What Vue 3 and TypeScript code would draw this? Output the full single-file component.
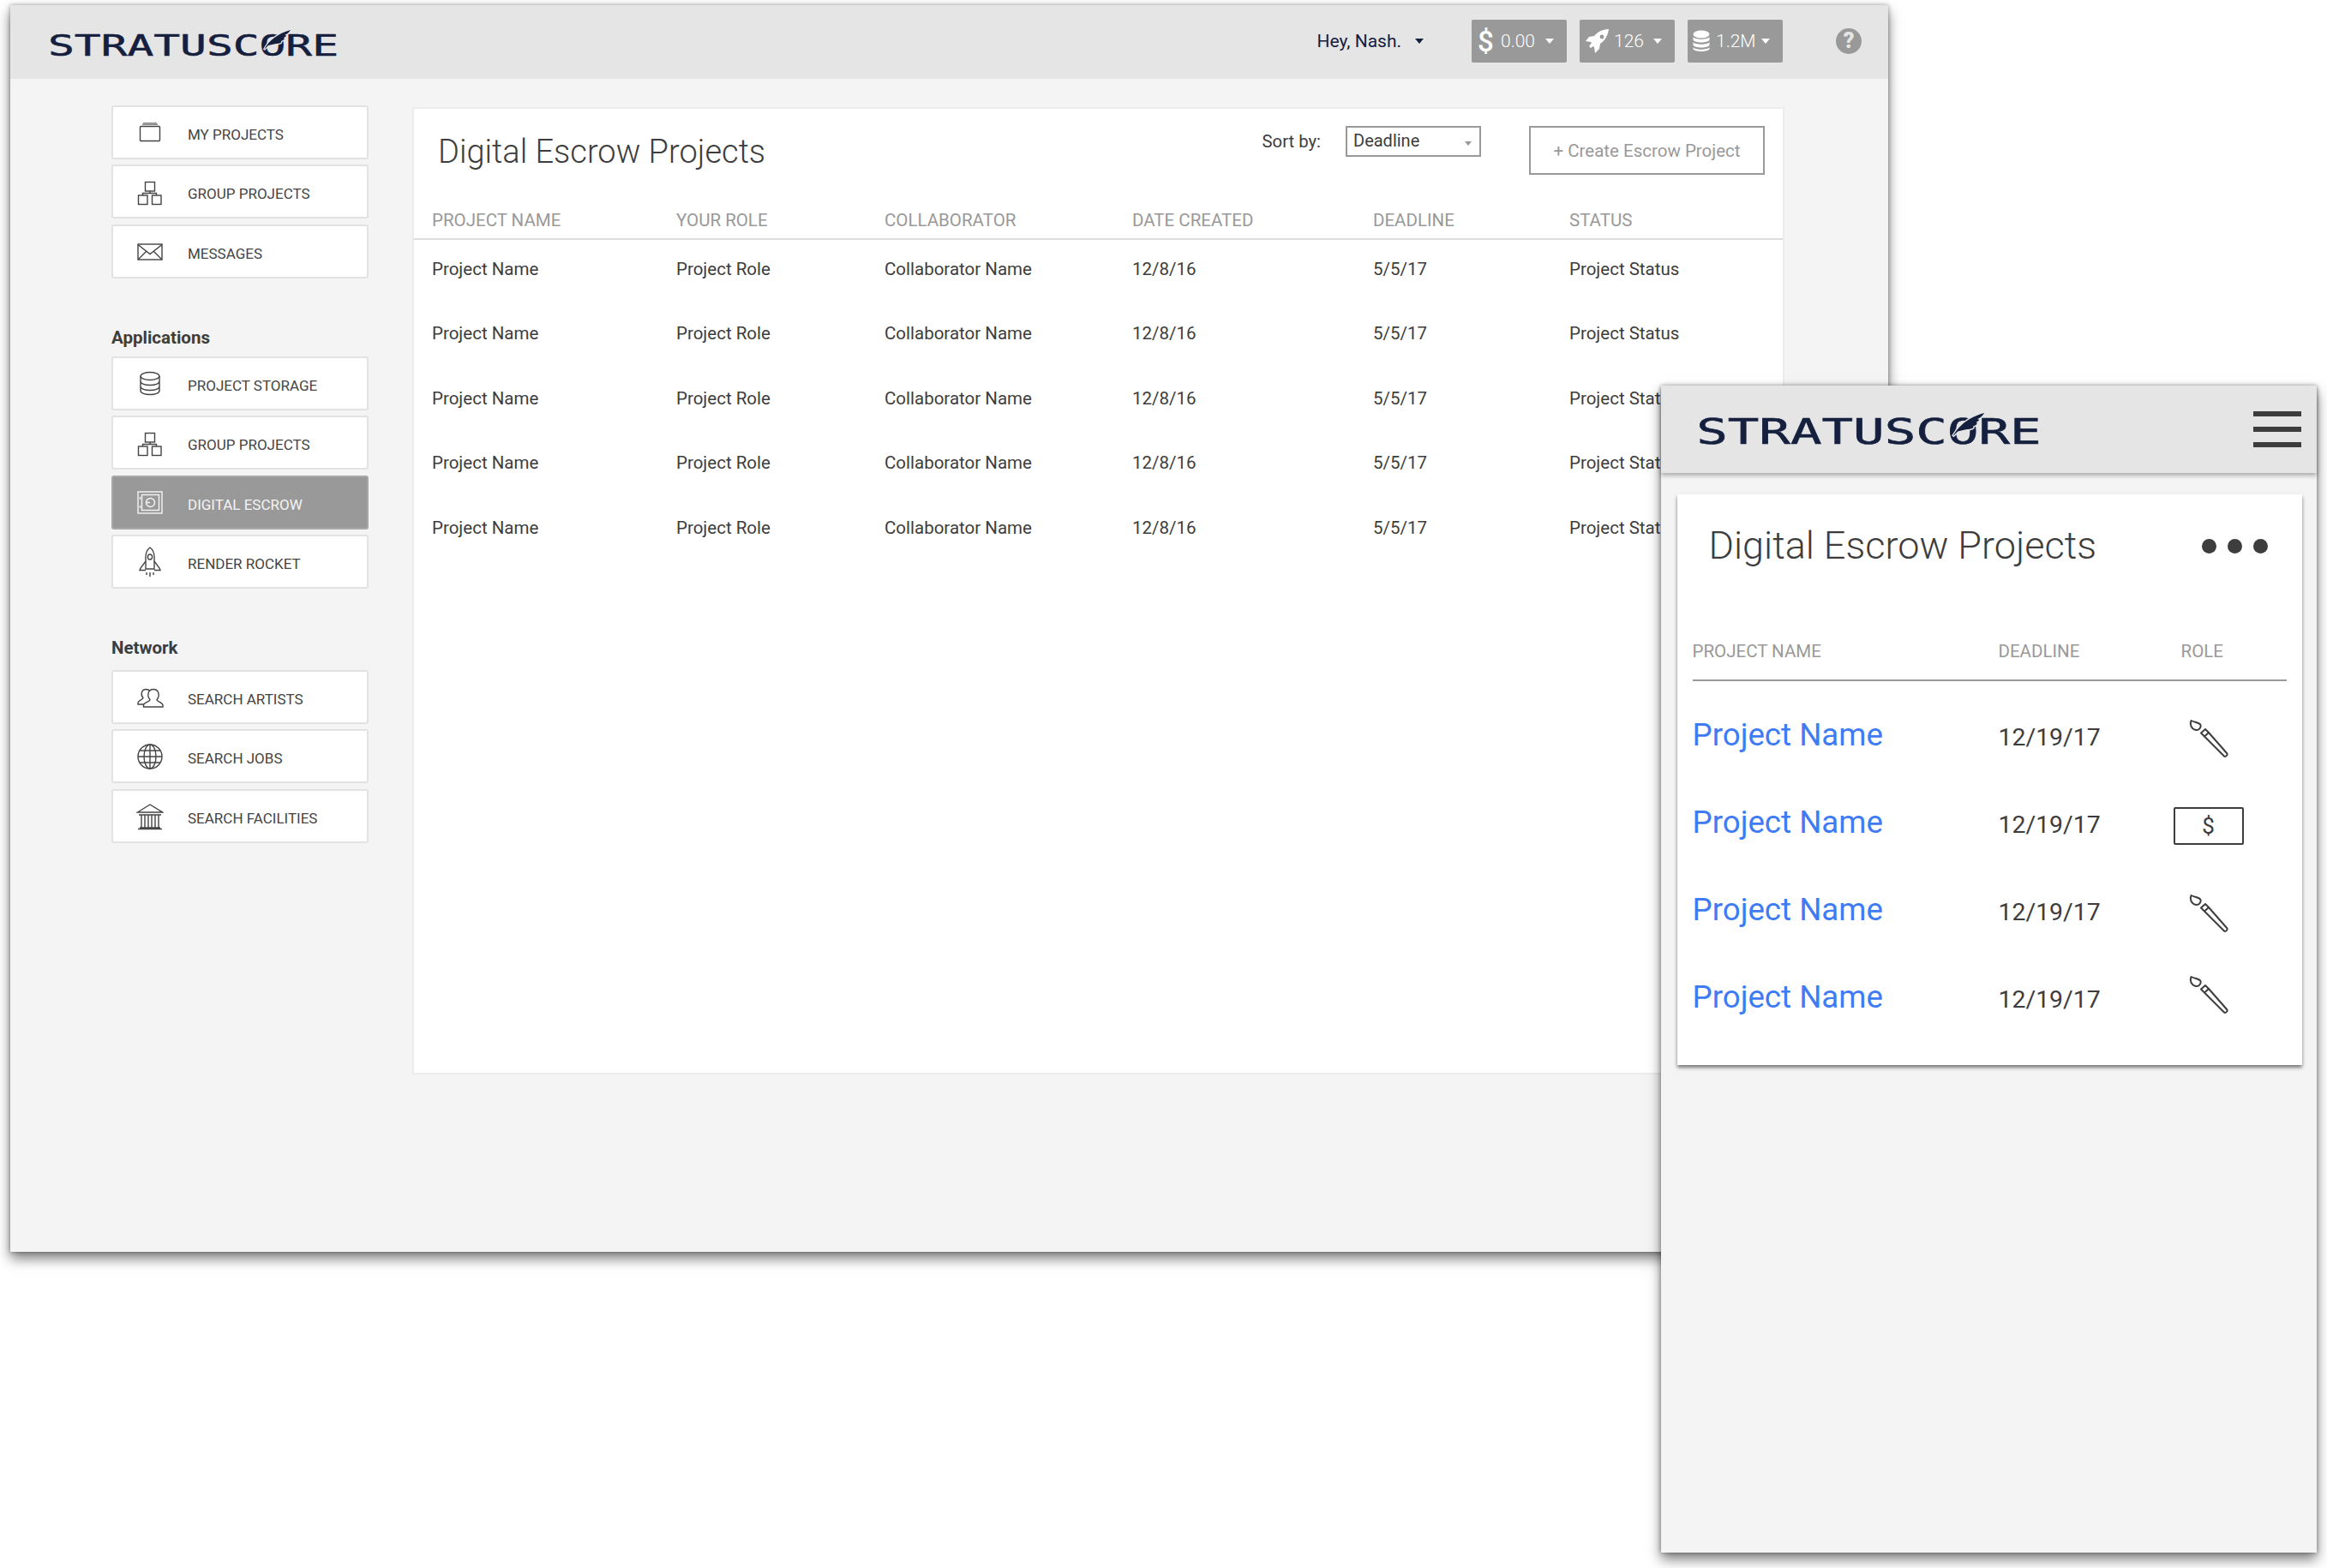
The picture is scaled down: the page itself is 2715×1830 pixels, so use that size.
<template>
  <div class="canvas">
    <section class="window desktop">
      <header class="topbar">
        <svg class="logo" viewBox="0 0 340 32" aria-label="Stratuscore">
          <text class="logo-text" x="0" y="30" textLength="339" lengthAdjust="spacingAndGlyphs">STRATUSCORE</text>
          <path class="quill" d="M252 23C258 12 268 4 283 0C281 3 279 5 276 6C279 6 278 8 275 9C277 10 275 12 272 13C273 15 270 16 266 16C263 17 260 17 257 18Z" />
        </svg>
        <div class="greeting">Hey, Nash. <i class="caret navy"></i></div>
        <div class="stat">
          <span class="stat-dollar">$</span>
          <span class="stat-value">0.00</span>
          <i class="caret"></i>
        </div>
        <div class="stat">
          <svg class="stat-rocket" viewBox="0 0 28 28">
            <path d="M28 0c-7 0-13 2-18 8l-6 1-4 5 6 1 1 1-3 4 2 2 3-2 1 1 1 7 5-5 1-6c6-4 9-10 10-17z" />
            <circle cx="19" cy="9" r="2.4" fill="#999" />
          </svg>
          <span class="stat-value">126</span>
          <i class="caret"></i>
        </div>
        <div class="stat">
          <svg class="stat-coins" viewBox="0 0 20 26">
            <ellipse cx="10" cy="5" rx="9.5" ry="4.5" />
            <path d="M.5 8c2 3.6 17 3.6 19 0v3.4c-1 4-18 4-19 0z" />
            <path d="M.5 14c2 3.6 17 3.6 19 0v3.4c-1 4-18 4-19 0z" />
            <path d="M.5 20c2 3.6 17 3.6 19 0v2c-1 4-18 4-19 0z" />
          </svg>
          <span class="stat-value">1.2M</span>
          <i class="caret"></i>
        </div>
        <div class="help">?</div>
      </header>

      <div class="desktop-body">
        <nav class="sidebar">
          <div v-for="section in navSections" :key="section.title" class="nav-section">
            <h3 v-if="section.title !== 'main'" class="nav-heading">{{ section.title }}</h3>
            <div class="nav-list">
              <a
                v-for="item in section.items"
                :key="item.label"
                class="nav-item"
                :class="{ active: item.active }"
              >
                <span class="nav-icon">
                  <svg viewBox="0 0 32 36" width="32" height="36">
                    <g v-if="item.icon === 'folder'">
                      <rect x="4.5" y="10.5" width="23" height="17" rx="1" />
                      <path d="M7 8.2h18M8 6.6h16" stroke="#888" />
                    </g>
                    <g v-else-if="item.icon === 'group'">
                      <rect x="10.5" y="6.5" width="11" height="10.5" />
                      <rect x="2.5" y="22" width="10.5" height="10.5" />
                      <rect x="18.5" y="22" width="10.5" height="10.5" />
                      <path d="M16 17v2.5M7.5 22v-2.5h16V22" />
                    </g>
                    <g v-else-if="item.icon === 'mail'">
                      <rect x="2" y="9" width="28" height="18" />
                      <path d="M2 9.5l14 11 14-11M2 27l10-10M30 27L20 17" />
                    </g>
                    <g v-else-if="item.icon === 'storage'">
                      <ellipse cx="16" cy="9" rx="11" ry="4.5" />
                      <path d="M5 9v17c0 6 22 6 22 0V9M5 15c0 6 22 6 22 0M5 21c0 6 22 6 22 0" />
                    </g>
                    <g v-else-if="item.icon === 'safe'">
                      <rect x="2" y="5" width="28" height="25" />
                      <rect x="6.5" y="8.5" width="20" height="18" />
                      <circle cx="16.5" cy="17.5" r="5" />
                      <path d="M11 17.5h5M4.5 11v3M4.5 21v3" />
                    </g>
                    <g v-else-if="item.icon === 'rocket'">
                      <path d="M16 1c-4 3-5 7-5 11v14h10V12c0-4-1-8-5-11z" />
                      <ellipse cx="16" cy="12" rx="2.6" ry="3" />
                      <path d="M11 17l-6 8-1 2.5h7M21 17l6 8 1 2.5h-7M12 30v3M16 30v5M20 30v3" />
                    </g>
                    <g v-else-if="item.icon === 'people'">
                      <path d="M9 26h-7v-2c0-2.5 6-3.5 6-5.5-3-3-2.5-10 3.5-10 2 0 3.5 1 4 2" />
                      <path d="M8.5 29v-2c0-3 7.500-4 7.500-6.500-3.500-3.500-3-12 4-12s7.500 8.500 4 12c0 2.500 7 3.500 7 6.500v2z" />
                    </g>
                    <g v-else-if="item.icon === 'globe'">
                      <circle cx="16" cy="18" r="14" />
                      <ellipse cx="16" cy="18" rx="7" ry="14" />
                      <path d="M16 4v28M2 18h28M4 11h24M4 25h24" />
                    </g>
                    <g v-else>
                      <path d="M1.500 13L16 4l14.500 9zM3 16h26M2 32.500h28M4 31h24" />
                      <path d="M6 16v15M10 16v15M14 16v15M18 16v15M22 16v15M26 16v15" />
                    </g>
                  </svg>
                </span>
                <span class="nav-label">{{ item.label }}</span>
              </a>
            </div>
          </div>
        </nav>

        <main class="card">
          <div class="card-head">
            <h1 class="card-title">Digital Escrow Projects</h1>
            <span class="sort-label">Sort by:</span>
            <div class="sort-select">Deadline <i class="select-arrow"></i></div>
            <button class="create-btn" type="button">+ Create Escrow Project</button>
          </div>
          <div class="table-row table-head">
            <span v-for="col in desktopColumns" :key="col">{{ col }}</span>
          </div>
          <div v-for="row in 5" :key="row" class="table-row table-body">
            <span>Project Name</span>
            <span>Project Role</span>
            <span>Collaborator Name</span>
            <span>12/8/16</span>
            <span>5/5/17</span>
            <span>Project Status</span>
          </div>
        </main>
      </div>
    </section>

    <section class="window phone">
      <header class="phone-bar">
        <svg class="phone-logo" viewBox="0 0 340 32" aria-label="Stratuscore">
          <text class="logo-text" x="0" y="30" textLength="339" lengthAdjust="spacingAndGlyphs">STRATUSCORE</text>
          <path class="quill" d="M252 23C258 12 268 4 283 0C281 3 279 5 276 6C279 6 278 8 275 9C277 10 275 12 272 13C273 15 270 16 266 16C263 17 260 17 257 18Z" />
        </svg>
        <div class="burger"><i></i><i></i><i></i></div>
      </header>

      <div class="phone-card">
        <div class="phone-head">
          <h1 class="phone-title">Digital Escrow Projects</h1>
          <div class="dots"><i></i><i></i><i></i></div>
        </div>
        <div class="phone-row phone-columns">
          <span>PROJECT NAME</span>
          <span>DEADLINE</span>
          <span>ROLE</span>
        </div>
        <div class="phone-rows">
          <div v-for="(row, index) in phoneRows" :key="index" class="phone-row phone-item">
            <a class="phone-name">Project Name</a>
            <span class="phone-date">12/19/17</span>
            <span class="phone-role">
              <span v-if="row === 'money'" class="money-box">$</span>
              <svg v-else class="brush" viewBox="0 0 80 60" width="80" height="60">
                <path d="M16.500 11C14.500 15 16.500 21 22 22C26 22.500 28.500 18.500 27.500 16C26 13 21 13.500 16.500 11Z" />
                <path d="M28 25.500L33 21L37 25L32 29.500ZM32 29.500L55 52.500C56.500 54 59.500 51 58.500 49.500L37 25" />
              </svg>
            </span>
          </div>
        </div>
      </div>
    </section>
  </div>
</template>

<script setup lang="ts">
type NavIcon = 'folder' | 'group' | 'mail' | 'storage' | 'safe' | 'rocket' | 'people' | 'globe' | 'bank'

interface NavItem {
  label: string
  icon: NavIcon
  active?: boolean
}

const navSections: { title: string; items: NavItem[] }[] = [
  {
    title: 'main',
    items: [
      { label: 'MY PROJECTS', icon: 'folder' },
      { label: 'GROUP PROJECTS', icon: 'group' },
      { label: 'MESSAGES', icon: 'mail' },
    ],
  },
  {
    title: 'Applications',
    items: [
      { label: 'PROJECT STORAGE', icon: 'storage' },
      { label: 'GROUP PROJECTS', icon: 'group' },
      { label: 'DIGITAL ESCROW', icon: 'safe', active: true },
      { label: 'RENDER ROCKET', icon: 'rocket' },
    ],
  },
  {
    title: 'Network',
    items: [
      { label: 'SEARCH ARTISTS', icon: 'people' },
      { label: 'SEARCH JOBS', icon: 'globe' },
      { label: 'SEARCH FACILITIES', icon: 'bank' },
    ],
  },
]

const desktopColumns = ['PROJECT NAME', 'YOUR ROLE', 'COLLABORATOR', 'DATE CREATED', 'DEADLINE', 'STATUS']

const phoneRows = ['brush', 'money', 'brush', 'brush']
</script>

<style>
html,
body {
  margin: 0;
  background: #fff;
}
</style>

<style scoped>
.canvas {
  position: relative;
  width: 2715px;
  height: 1830px;
  overflow: hidden;
  font-family: Roboto, "Liberation Sans", sans-serif;
  color: #3d3d3d;
}

.window {
  position: absolute;
  box-sizing: border-box;
  background: #f4f4f4;
  box-shadow: 0 8px 14px rgba(0, 0, 0, 0.5), 0 0 5px rgba(0, 0, 0, 0.35);
}

.desktop {
  left: 12px;
  top: 6px;
  width: 2191px;
  height: 1455px;
}

.phone {
  left: 1938px;
  top: 450px;
  width: 765px;
  height: 1362px;
}

.topbar {
  display: flex;
  align-items: center;
  height: 86px;
  padding: 0 0 2px 44px;
  box-sizing: border-box;
  background: #e5e5e5;
}

.logo {
  width: 340px;
  height: 32px;
  margin-top: 6px;
  margin-right: auto;
  overflow: visible;
}

.logo-text {
  font-family: "DejaVu Sans Mono", monospace;
  font-size: 34px;
  font-weight: 400;
  fill: #15203f;
  stroke: #15203f;
  stroke-width: 0.5;
}

.quill {
  fill: #15203f;
  stroke: #e5e5e5;
  stroke-width: 2.5;
  paint-order: stroke;
}

.greeting {
  display: flex;
  align-items: center;
  gap: 16px;
  margin-right: 56px;
  font-size: 21px;
  color: #15203f;
}

.caret {
  display: inline-block;
  width: 0;
  height: 0;
  border-left: 5px solid transparent;
  border-right: 5px solid transparent;
  border-top: 6px solid #fff;
}

.caret.navy {
  border-top-color: #15203f;
}

.stat {
  display: flex;
  align-items: center;
  width: 111px;
  height: 50px;
  margin-right: 15px;
  padding-left: 7px;
  box-sizing: border-box;
  border-radius: 2px;
  background: #999;
  color: #fff;
}

.stat .caret {
  margin-left: auto;
  margin-right: 15px;
}

.stat-dollar {
  width: 27px;
  font-size: 33px;
  font-weight: 500;
}

.stat-value {
  font-size: 21px;
  font-weight: 300;
}

.stat-rocket {
  width: 28px;
  height: 28px;
  margin-right: 5px;
  fill: #fff;
}

.stat-coins {
  width: 20px;
  height: 26px;
  margin-left: -1px;
  margin-right: 7px;
  fill: #fff;
}

.help {
  width: 30px;
  height: 30px;
  margin-left: 47px;
  margin-right: 31px;
  border-radius: 50%;
  background: #999;
  color: #e5e5e5;
  font-size: 25px;
  font-weight: 900;
  line-height: 30px;
  text-align: center;
}

.desktop-body {
  display: flex;
  gap: 51px;
  padding: 31px 0 0 118px;
}

.sidebar {
  display: flex;
  flex-direction: column;
  gap: 55px;
  width: 300px;
}

.nav-heading {
  margin: 2px 0 10px;
  font-size: 20.500px;
  font-weight: 700;
  line-height: 24px;
}

.nav-section:last-child .nav-heading {
  margin-bottom: 14px;
}

.nav-list {
  display: flex;
  flex-direction: column;
  gap: 6.400px;
}

.nav-item {
  display: flex;
  align-items: center;
  gap: 15px;
  height: 63px;
  padding-left: 14px;
  box-sizing: border-box;
  border: 2px solid #e2e2e2;
  border-radius: 3px;
  background: #fff;
  font-size: 17px;
  color: #444;
}

.nav-item.active {
  border-color: #a8a8a8;
  background: #999;
  color: #f4f4f4;
}

.nav-icon {
  display: flex;
  justify-content: center;
  width: 58px;
  margin-top: 1px;
}

.nav-label {
  margin-top: 5px;
}

.nav-icon svg {
  fill: none;
  stroke: #444;
  stroke-width: 1.400;
}

.nav-item.active .nav-icon svg {
  stroke: #f4f4f4;
}

.card {
  box-sizing: border-box;
  width: 1601px;
  height: 1129px;
  margin-top: 2px;
  border: 2px solid #ececec;
  background: #fff;
}

.card-head {
  display: flex;
  align-items: flex-start;
  height: 110px;
  padding: 20px 21px 0 28px;
  box-sizing: border-box;
}

.card-title {
  margin: 0 auto 0 0;
  font-size: 38px;
  font-weight: 300;
  line-height: 60px;
}

.sort-label {
  margin-right: 29px;
  font-size: 20.300px;
  line-height: 36px;
}

.sort-select {
  position: relative;
  width: 158px;
  height: 36px;
  margin-right: 56px;
  padding-left: 7px;
  box-sizing: border-box;
  border: 2px solid #999;
  font-size: 20px;
  line-height: 31px;
}

.select-arrow {
  position: absolute;
  right: 9px;
  top: 16px;
  border-left: 4px solid transparent;
  border-right: 4px solid transparent;
  border-top: 5px solid #999;
}

.create-btn {
  width: 275px;
  height: 57px;
  padding: 0;
  border: 2px solid #999;
  background: #fff;
  color: #999;
  font-family: inherit;
  font-size: 20.500px;
  font-weight: 400;
}

.table-row {
  display: grid;
  grid-template-columns: 285px 243px 289px 281px 229px 1fr;
  padding-left: 21px;
}

.table-head {
  height: 43px;
  box-sizing: border-box;
  border-bottom: 2px solid #ddd;
  color: #999;
  font-size: 20.500px;
  line-height: 41px;
}

.table-body {
  height: 75.400px;
  padding-top: 22px;
  box-sizing: border-box;
  font-size: 20.500px;
  line-height: 24px;
}

.phone-bar {
  position: relative;
  display: flex;
  align-items: center;
  justify-content: space-between;
  height: 102px;
  padding: 0 18px 0 40px;
  box-sizing: border-box;
  background: #e5e5e5;
  box-shadow: 0 3px 5px rgba(0, 0, 0, 0.3);
}

.phone-logo {
  width: 406px;
  height: 38px;
  overflow: visible;
}

.burger {
  display: flex;
  flex-direction: column;
  gap: 12px;
  width: 56px;
}

.burger i {
  height: 6px;
  background: #3d3d3d;
}

.phone-card {
  box-sizing: border-box;
  width: 729.500px;
  height: 666px;
  margin: 25px 0 0 18.500px;
  background: #fff;
  box-shadow: 0 3px 4px rgba(0, 0, 0, 0.5);
}

.phone-head {
  display: flex;
  align-items: center;
  justify-content: space-between;
  height: 60px;
  padding: 30px 40px 0 37px;
}

.phone-title {
  margin: 0;
  font-size: 45px;
  font-weight: 300;
  line-height: 60px;
}

.dots {
  display: flex;
  gap: 13px;
}

.dots i {
  width: 17px;
  height: 17px;
  border-radius: 50%;
  background: #3d3d3d;
}

.phone-row {
  display: grid;
  grid-template-columns: 357px 213px 1fr;
  align-items: center;
}

.phone-columns {
  height: 65px;
  margin: 63px 18px 0;
  padding-bottom: 3px;
  box-sizing: border-box;
  border-bottom: 2px solid #999;
  color: #999;
  font-size: 20.500px;
  line-height: 34px;
}

.phone-rows {
  margin: 14px 18px 0;
}

.phone-item {
  height: 102px;
}

.phone-name {
  font-size: 36.700px;
  color: #3f7cf3;
  line-height: 40px;
  margin-top: -4px;
}

.phone-date {
  font-size: 28.400px;
}

.phone-role {
  display: flex;
  align-items: center;
}

.brush {
  margin-left: -5px;
  margin-top: -1px;
  fill: none;
  stroke: #3d3d3d;
  stroke-width: 2;
  stroke-linejoin: round;
}

.phone-item:last-child .brush {
  margin-top: -15px;
}

.money-box {
  width: 82px;
  height: 44px;
  margin-left: -9px;
  margin-top: 3px;
  box-sizing: border-box;
  border: 2px solid #3d3d3d;
  border-radius: 2px;
  font-size: 26px;
  line-height: 40px;
  text-align: center;
}
</style>
